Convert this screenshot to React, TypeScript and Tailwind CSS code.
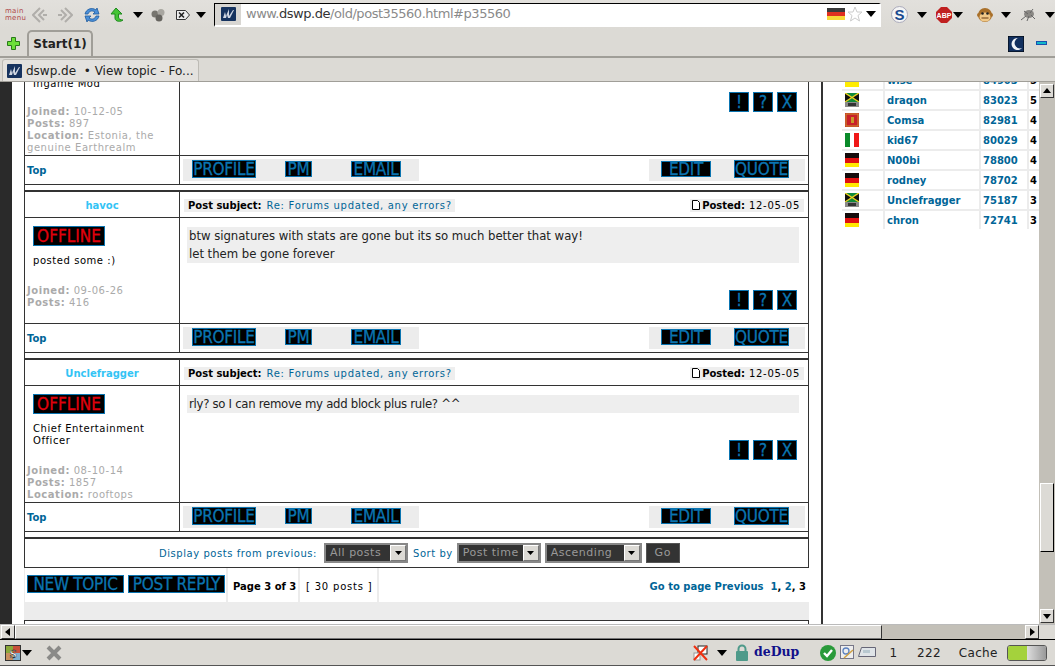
import React from "react";

const DJ = "font-['DejaVu_Sans',sans-serif]";
const COND = "font-['DejaVu_Sans_Condensed','DejaVu_Sans',sans-serif]";

function Caret({ className = "" }: { className?: string }) {
  return (
    <svg width="10" height="6" viewBox="0 0 10 6" className={className}>
      <path d="M0 0h10L5 6z" fill="#000" />
    </svg>
  );
}

function Favicon() {
  return (
    <svg width="15" height="14" viewBox="0 0 15 14" className="shrink-0">
      <rect width="15" height="14" rx="1" fill="#16335f" />
      <path d="M2 11l2-6 1 4 3-7 0 7 4-6 1 0-4 8H7l-1-3-1 3z" fill="#cfd6e2" />
    </svg>
  );
}

function Flag({ kind }: { kind: string }) {
  if (kind === "de")
    return (
      <svg width="14" height="14" viewBox="0 0 14 14">
        <rect width="14" height="5" fill="#140a0a" />
        <rect y="5" width="14" height="5" fill="#e01010" />
        <rect y="10" width="14" height="4" fill="#ffe800" />
      </svg>
    );
  if (kind === "it")
    return (
      <svg width="14" height="14" viewBox="0 0 14 14">
        <rect width="5" height="14" fill="#0a8a2a" />
        <rect x="5" width="4" height="14" fill="#fff" />
        <rect x="9" width="5" height="14" fill="#f01818" />
      </svg>
    );
  if (kind === "me")
    return (
      <svg width="14" height="14" viewBox="0 0 14 14">
        <rect width="14" height="14" fill="#c8202a" />
        <rect x="1" y="1" width="12" height="12" fill="none" stroke="#c8982a" />
        <rect x="6" y="4" width="3" height="6" fill="#c8982a" />
      </svg>
    );
  return (
    <svg width="14" height="14" viewBox="0 0 14 14">
      <rect width="14" height="9" fill="#108a3a" />
      <path d="M0 0l14 9V0L0 9z" fill="#111" />
      <path d="M0 0l14 9M14 0L0 9" stroke="#f0d020" strokeWidth="1.4" />
      <rect y="9" width="14" height="5" fill="#8a8a88" />
      <rect x="3" y="10" width="8" height="3" fill="#333" />
    </svg>
  );
}

function PB({ label, w, h = 16 }: { label: string; w: number; h?: number }) {
  return (
    <span
      style={{ width: w, height: h }}
      className={`inline-flex items-center justify-center bg-black border border-[#0a74b0] text-[#0a74b0] text-[17px] leading-none tracking-[-0.3px] whitespace-nowrap [-webkit-text-stroke:0.3px_#0a74b0] ${COND}`}
    >
      {label}
    </span>
  );
}

function Footer() {
  return (
    <div className="flex h-[29px] border-b border-[#333]">
      <div className={`w-[155px] shrink-0 border-r border-[#333] flex items-center pl-[2px] text-[10px] font-bold text-[#006597] ${DJ}`}>
        Top
      </div>
      <div className="flex-1 flex items-center justify-between pl-[3px] pr-[3px]">
        <div className="h-[22px] w-[236px] bg-[#ececec] flex items-center pb-[2px]">
          <span className="ml-[9px] flex"><PB label="PROFILE" w={64} h={18} /></span>
          <span className="ml-[29px] flex"><PB label="PM" w={27} /></span>
          <span className="ml-[39px] flex"><PB label="EMAIL" w={50} /></span>
        </div>
        <div className="h-[22px] w-[156px] bg-[#ececec] flex items-center pb-[2px]">
          <span className="ml-[12px] flex"><PB label="EDIT" w={50} /></span>
          <span className="ml-[23px] flex"><PB label="QUOTE" w={55} h={18} /></span>
        </div>
      </div>
    </div>
  );
}

function Actions() {
  return (
    <div className="flex justify-end gap-[4px] pr-[11px]">
      {["!", "?", "X"].map((t) => (
        <span key={t} className={`w-[20px] h-[20px] bg-black border border-[#0a74b0] text-[#0a74b0] text-[17px] leading-none flex items-center justify-center [-webkit-text-stroke:0.3px_#0a74b0] ${COND}`}>
          {t}
        </span>
      ))}
    </div>
  );
}

function Stat({ k, v }: { k: string; v: string }) {
  return (
    <div className="leading-[12px]">
      <b>{k}:</b> {v}
    </div>
  );
}

function Post({
  name,
  rank,
  stats,
  body,
  bodyH,
  actionPad,
  statsBottom,
  bodyTrack,
}: {
  name: string;
  rank: string[];
  stats: [string, string][];
  body: string[];
  bodyH: number;
  actionPad: number;
  statsBottom: number;
  bodyTrack: number;
}) {
  return (
    <>
      <div className="h-[2px] bg-[#333]" />
      <div className="flex h-[26px] border-b border-[#333]">
        <div className={`w-[155px] shrink-0 border-r border-[#333] flex items-center justify-center pt-[1px] text-[10px] font-bold text-[#33c4f5] ${DJ}`}>
          {name}
        </div>
        <div className={`flex-1 flex items-center justify-between pl-[4px] pr-[4px] pt-[1px] text-[10px] tracking-[0.7px] ${DJ}`}>
          <div className="bg-[#eee] h-[13px] flex items-center pl-[4px] pr-[3px]">
            <b className="text-black tracking-normal mr-[5px]">Post subject:</b>
            <span className="text-[#006597]">Re: Forums updated, any errors?</span>
          </div>
          <div className="bg-[#eee] h-[13px] flex items-center pl-[2px] pr-[4px] text-black">
            <svg width="8" height="10" viewBox="0 0 8 10" className="mr-[2px]">
              <path d="M.5.5h5l2 2v7h-7z" fill="#fff" stroke="#000" />
            </svg>
            <b className="tracking-normal mr-[4px]">Posted:</b>12-05-05
          </div>
        </div>
      </div>
      <div style={{ height: bodyH + 1 }} className="flex border-b border-[#333]">
        <div className={`w-[155px] shrink-0 border-r border-[#333] flex flex-col text-[10px] tracking-[0.55px] ${DJ}`}>
          <div className={`ml-[8px] mt-[8px] w-[72px] h-[20px] bg-black border border-[#0a74b0] text-[#e0000c] text-[17px] leading-none flex items-center justify-center tracking-[0px] [-webkit-text-stroke:0.3px_#e0000c] ${COND}`}>
            OFFLINE
          </div>
          <div className="ml-[8px] mt-[9px] text-black leading-[12px]">
            {rank.map((r) => (
              <div key={r}>{r}</div>
            ))}
          </div>
          <div style={{ marginBottom: statsBottom }} className="mt-auto ml-[2px] text-[#aaa]">
            {stats.map(([k, v]) => (
              <Stat key={k} k={k} v={v} />
            ))}
          </div>
        </div>
        <div className="flex-1 flex flex-col">
          <div
            style={{ letterSpacing: bodyTrack }}
            className={`mt-[9px] ml-[7px] mr-[9px] bg-[#eee] px-[2px] text-[13px] leading-[18px] text-[#222] whitespace-nowrap ${COND}`}
          >
            {body.map((b) => (
              <div key={b}>{b}</div>
            ))}
          </div>
          <div style={{ marginTop: actionPad }}>
            <Actions />
          </div>
        </div>
      </div>
      <Footer />
      <div className="h-[5px]" />
    </>
  );
}

function Select({ label, w }: { label: string; w: number }) {
  return (
    <span style={{ width: w }} className="h-[20px] bg-[#333] border-2 border-[#888] text-[#999] text-[11px] tracking-[0.5px] flex items-center justify-between pl-[4px]">
      <span className="pt-[1px]">{label}</span>
      <span className="w-[16px] h-[16px] bg-[#dcdad5] border border-t-white border-l-white border-b-[#777] border-r-[#777] flex items-center justify-center">
        <svg width="7" height="4" viewBox="0 0 7 4"><path d="M0 0h7L3.500 4z" fill="#000" /></svg>
      </span>
    </span>
  );
}

const ranks: [string, string, string, string][] = [
  ["jm", "draqon", "83023", "5"],
  ["me", "Comsa", "82981", "4"],
  ["it", "kid67", "80029", "4"],
  ["de", "N00bi", "78800", "4"],
  ["de", "rodney", "78702", "4"],
  ["jm", "Unclefragger", "75187", "3"],
  ["de", "chron", "72741", "3"],
];

function Toolbar() {
  return (
    <div className="h-[29px] shrink-0 flex items-center bg-[linear-gradient(#e2e0dc,#dcdad5)] relative">
      <div className="w-[32px] pl-[5px] text-[7px] leading-[7px] text-[#b04a4a] font-['DejaVu_Sans',sans-serif] tracking-[0.3px]">
        <div>main</div>
        <div>menu</div>
      </div>
      <svg width="16" height="16" viewBox="0 0 16 16" className="shrink-0">
        <path d="M8 1L1 8l7 7M12 3L7 8l5 5" fill="none" stroke="#b0aeaa" strokeWidth="2" />
        <path d="M11 7h4v2h-4z" fill="#b0aeaa" />
      </svg>
      <svg width="16" height="16" viewBox="0 0 16 16" className="ml-[9px] shrink-0">
        <path d="M8 1l7 7-7 7M4 3l5 5-5 5" fill="none" stroke="#b0aeaa" strokeWidth="2" />
        <path d="M1 7h4v2H1z" fill="#b0aeaa" />
      </svg>
      <svg width="18" height="18" viewBox="0 0 18 18" className="ml-[10px] shrink-0">
        <path d="M2 8c1-5 7-7 11-4l1-2 2 6-6 0 2-2c-3-2-6-1-7 2z" fill="#4a8fd8" stroke="#1d5a9e" strokeWidth=".8" />
        <path d="M16 10c-1 5-7 7-11 4l-1 2-2-6 6 0-2 2c3 2 6 1 7-2z" fill="#4a8fd8" stroke="#1d5a9e" strokeWidth=".8" />
      </svg>
      <svg width="16" height="16" viewBox="0 0 16 16" className="ml-[8px] shrink-0">
        <path d="M7 1l6 6H9.500v3c0 2 2 3 4.500 3-2 2-8 2-8-2V7H2z" fill="#45c435" stroke="#1f8a1f" />
      </svg>
      <Caret className="ml-[8px] shrink-0" />
      <svg width="14" height="14" viewBox="0 0 14 14" className="ml-[8px] shrink-0">
        <circle cx="4" cy="6" r="3.500" fill="#77756f" />
        <circle cx="10" cy="4.500" r="3.500" fill="#a8a6a0" />
        <circle cx="8" cy="10" r="3.500" fill="#66645f" />
      </svg>
      <svg width="14" height="10" viewBox="0 0 14 10" className="ml-[11px] shrink-0">
        <path d="M.5.500h9l4 4.500-4 4.500h-9z" fill="#eee" stroke="#333" />
        <path d="M3 2.500l5 5M8 2.500l-5 5" stroke="#222" strokeWidth="1.600" />
      </svg>
      <Caret className="ml-[6px] shrink-0" />
      <div className="ml-[8px] w-[667px] h-[24px] shrink-0 flex items-stretch border-t border-l border-t-black border-l-black border-r-2 border-b-2 border-r-white border-b-white bg-white">
        <div className="w-[26px] bg-[#d8d6d2] flex items-center justify-center"><Favicon /></div>
        <div className="flex-1 pl-[5px] flex items-center text-[13px] tracking-[-0.46px] text-[#8a8a8a] font-['DejaVu_Sans',sans-serif]">
          www.<span className="text-[#333]">dswp.de</span>/old/post35560.html#p35560
        </div>
        <div className="flex items-center pr-[3px]">
          <svg width="18" height="12" viewBox="0 0 18 12">
            <rect width="18" height="4" fill="#3a3a3a" />
            <rect y="4" width="18" height="4" fill="#e03020" />
            <rect y="8" width="18" height="4" fill="#f8d838" />
          </svg>
          <svg width="16" height="16" viewBox="0 0 16 16" className="ml-[2px]">
            <path d="M8 1l2 5h5l-4 3.500 1.500 5.500L8 12l-4.500 3L5 9.500 1 6h5z" fill="#fff" stroke="#ccc" />
          </svg>
          <Caret className="ml-[3px]" />
        </div>
      </div>
      <svg width="17" height="17" viewBox="0 0 17 17" className="ml-[10px] shrink-0">
        <circle cx="8.500" cy="8.500" r="8" fill="#f4f4f4" stroke="#aab" />
        <text x="8.500" y="14" fontSize="15" fontWeight="700" fontFamily="Liberation Sans" textAnchor="middle" fill="#1a4a90">S</text>
      </svg>
      <Caret className="ml-[9px] shrink-0" />
      <svg width="16" height="16" viewBox="0 0 16 16" className="ml-[9px] shrink-0">
        <path d="M5 0h6l5 5v6l-5 5H5l-5-5V5z" fill="#c02020" />
        <text x="8" y="11" fontSize="7" fontWeight="700" fontFamily="Liberation Sans" textAnchor="middle" fill="#fff">ABP</text>
      </svg>
      <Caret className="ml-[1px] shrink-0" />
      <svg width="16" height="17" viewBox="0 0 16 17" className="ml-[14px] shrink-0">
        <circle cx="2" cy="9" r="2" fill="#a9702a" />
        <circle cx="14" cy="9" r="2" fill="#a9702a" />
        <circle cx="8" cy="9" r="7" fill="#a9702a" />
        <ellipse cx="8" cy="11" rx="5.500" ry="4.500" fill="#f0c888" />
        <circle cx="5.500" cy="7.500" r="1.300" fill="#222" />
        <circle cx="10.500" cy="7.500" r="1.300" fill="#222" />
        <path d="M4.500 12h7" stroke="#6a3a10" />
      </svg>
      <Caret className="ml-[8px] shrink-0" />
      <svg width="16" height="14" viewBox="0 0 16 14" className="ml-[9px] shrink-0">
        <ellipse cx="9" cy="6" rx="5" ry="4" fill="#8a8884" />
        <path d="M1 12l5-4M4 3l4 3M13 1l-3 4M15 11l-4-4M7 13l2-5" stroke="#666" />
      </svg>
      <Caret className="ml-[9px] shrink-0" />
    </div>
  );
}

function TabRows() {
  return (
    <>
      <div className="h-[29px] shrink-0 flex items-end bg-[#dcdad5] border-b-2 border-[#a09e98] pl-[7px] pr-[8px]">
        <svg width="13" height="13" viewBox="0 0 13 13" className="mb-[6px] shrink-0">
          <path d="M4.500.500h4v4h4v4h-4v4h-4v-4h-4v-4h4z" fill="#6ddf3a" stroke="#2a7a1a" />
        </svg>
        <div className={`ml-[7px] w-[66px] h-[26px] border-2 border-b-0 border-[#a09e98] rounded-t-[5px] bg-[#dcdad5] flex items-center justify-center text-[12px] font-bold text-[#222] ${DJ}`}>
          Start(1)
        </div>
        <svg width="16" height="16" viewBox="0 0 16 16" className="ml-auto mb-[4px] shrink-0">
          <rect width="16" height="16" fill="#12305f" stroke="#000" />
          <path d="M10 2a6 6 0 1 0 4 10 5 5 0 0 1-4-10z" fill="#f2f4f8" />
        </svg>
        <span className="ml-[12px] mb-[11px] w-[11px] h-[4px] bg-[#12b8c8] border border-[#1a50b0] shrink-0" />
      </div>
      <div className="h-[24px] shrink-0 bg-[#dcdad5] flex items-end pl-[2px] border-b border-[#a09e98]">
        <div className={`w-[197px] h-[22px] bg-[#e4e2de] border border-b-0 border-[#bdbbb5] rounded-t-[3px] flex items-center pl-[4px] text-[12px] text-[#222] ${DJ}`}>
          <Favicon />
          <span className="ml-[4px] whitespace-nowrap">dswp.de&nbsp; • View topic - Fo...</span>
        </div>
      </div>
    </>
  );
}

function Forum() {
  return (
    <div className="w-[785px] ml-[12px] shrink-0 flex flex-col">
      <div className="border-x border-[#333]">
        <div className="flex h-[74px] border-b border-[#333]">
          <div className={`w-[155px] shrink-0 border-r border-[#333] flex flex-col justify-end overflow-hidden text-[10px] tracking-[0.55px] text-[#aaa] pb-[1px] pl-[2px] ${DJ}`}>
            <div className="ml-[6px] text-black leading-[12px] mb-[16px]">Ingame Mod</div>
            <Stat k="Joined" v="10-12-05" />
            <Stat k="Posts" v="897" />
            <Stat k="Location" v="Estonia, the" />
            <div className="leading-[12px]">genuine Earthrealm</div>
          </div>
          <div className="flex-1 pt-[10px]"><Actions /></div>
        </div>
        <Footer />
        <div className="h-[5px]" />
        <Post
          name="havoc"
          rank={["posted some :)"]}
          stats={[["Joined", "09-06-26"], ["Posts", "416"]]}
          body={["btw signatures with stats are gone but its so much better that way!", "let them be gone forever"]}
          bodyH={105}
          actionPad={27}
          statsBottom={14}
          bodyTrack={-0.03}
        />
        <Post
          name="Unclefragger"
          rank={["Chief Entertainment", "Officer"]}
          stats={[["Joined", "08-10-14"], ["Posts", "1857"], ["Location", "rooftops"]]}
          body={["rly? so I can remove my add block plus rule? ^^"]}
          bodyH={116}
          actionPad={27}
          statsBottom={1}
          bodyTrack={-0.28}
        />
        <div className="h-[2px] bg-[#333]" />
        <div className={`h-[29px] border-b border-[#333] flex items-center pl-[134px] text-[10px] tracking-[0.55px] text-[#006597] ${DJ}`}>
          <span>Display posts from previous:</span>
          <span className="ml-[7px]"><Select label="All posts" w={84} /></span>
          <span className="ml-[5px]">Sort by</span>
          <span className="ml-[4px]"><Select label="Post time" w={84} /></span>
          <span className="ml-[4px]"><Select label="Ascending" w={97} /></span>
          <span className="ml-[4px] w-[34px] h-[20px] bg-[#333] border border-[#555] text-[#999] text-[11px] flex items-center justify-center">Go</span>
        </div>
      </div>
      <div className={`h-[34px] flex items-stretch text-[10px] ${DJ}`}>
        <div className="w-[204px] border-l border-r-2 border-[#ececec] flex items-center gap-[4px] pl-[2px] pb-[2px]">
          <PB label="NEW TOPIC" w={97} h={18} />
          <PB label="POST REPLY" w={97} h={18} />
        </div>
        <div className="w-[72px] border-r-2 border-[#ececec] flex items-center pl-[5px] pt-[2px] font-bold whitespace-nowrap">Page 3 of 3</div>
        <div className="w-[79px] border-r-2 border-[#ececec] flex items-center pl-[6px] pt-[2px] tracking-[0.8px] whitespace-nowrap">[ 30 posts ]</div>
        <div className="flex-1 flex items-center justify-end pr-[3px] pt-[2px] font-bold text-[#006597] whitespace-nowrap">
          Go to page Previous&nbsp;&nbsp;1<span className="text-black">,</span>&nbsp;2<span className="text-black">,</span>&nbsp;<span className="text-black">3</span>
        </div>
      </div>
      <div className="h-[18px] bg-[#ececec]" />
      <div className="flex-1 border-t border-x border-[#333]" />
    </div>
  );
}

function Sidebar() {
  const cell = "bg-white h-[18px] flex items-center";
  return (
    <div className={`ml-[19px] w-[198px] bg-[#ececec] flex flex-col gap-[2px] self-start text-[10px] font-bold text-[#006597] ${DJ}`}>
      <div className="h-[7px] flex gap-[2px] overflow-hidden leading-[12px]">
        <div className="w-[41px] bg-white pl-[3px]"><div className="w-[14px] h-[5px] bg-[#ffec00]" /></div>
        <div className="w-[94px] bg-white pl-[2px]"><div className="-mt-[7px]">wise</div></div>
        <div className="w-[46px] bg-white pl-[2px]"><div className="-mt-[7px]">84903</div></div>
        <div className="flex-1 bg-white pl-[1px] text-black"><div className="-mt-[7px]">5</div></div>
      </div>
      {ranks.map(([f, n, p, c]) => (
        <div key={n} className="flex gap-[2px]">
          <div className={`${cell} w-[41px] pl-[3px]`}><Flag kind={f} /></div>
          <div className={`${cell} w-[94px] pl-[2px]`}>{n}</div>
          <div className={`${cell} w-[46px] pl-[2px]`}>{p}</div>
          <div className={`${cell} flex-1 pl-[1px] text-black`}>{c}</div>
        </div>
      ))}
    </div>
  );
}

function ScrollBtn({ d }: { d: string }) {
  return (
    <span className="w-[14px] h-[14px] shrink-0 bg-[#dcdad5] border border-t-white border-l-white border-b-[#333] border-r-[#333] flex items-center justify-center">
      <svg width="8" height="8" viewBox="0 0 8 8"><path d={d} fill="#000" /></svg>
    </span>
  );
}

export default function App() {
  return (
    <div className="w-[1055px] h-[666px] overflow-hidden flex flex-col bg-[#dcdad5]">
      <Toolbar />
      <TabRows />
      <div className="h-[542px] shrink-0 flex bg-white overflow-hidden">
        <div className="w-[12px] shrink-0 bg-[#2a2a2a]" />
        <Forum />
        <div className="ml-[12px] w-[2px] shrink-0 bg-[#333]" />
        <Sidebar />
        <div className="w-[16px] shrink-0 ml-auto bg-[#c3c0b8] flex flex-col items-center pt-[2px] pb-[1px]">
          <ScrollBtn d="M0 6h8L4 1z" />
          <div className="mt-[385px] w-[14px] h-[69px] bg-[#dcdad5] border border-t-white border-l-white border-b-black border-r-black" />
          <div className="mt-auto"><ScrollBtn d="M0 2h8L4 7z" /></div>
        </div>
      </div>
      <div className="h-[15px] shrink-0 flex items-center bg-[#dcdad5] pl-[1px] pr-[16px] border-t border-[#bbb]">
        <ScrollBtn d="M6 0v8L1 4z" />
        <div className="w-[867px] h-[14px] bg-[#dcdad5] border border-t-white border-l-white border-b-[#777] border-r-[#333]" />
        <div className="flex-1 h-[14px] bg-[#c3c0b8] flex justify-end"><ScrollBtn d="M2 0v8l5-4z" /></div>
      </div>
      <div className={`flex-1 flex items-center border-t border-black border-b border-b-[#555] pl-[5px] text-[12px] text-[#222] ${DJ}`}>
        <svg width="16" height="16" viewBox="0 0 16 16" className="shrink-0">
          <rect width="16" height="16" fill="#333" />
          <rect x="1" y="1" width="7" height="7" fill="#8aa83a" />
          <rect x="8" y="1" width="7" height="7" fill="#c8503a" />
          <rect x="1" y="8" width="7" height="7" fill="#c89060" />
          <rect x="8" y="8" width="7" height="7" fill="#80b0d0" />
          <text x="8" y="13" fontSize="13" fontWeight="700" fontFamily="Liberation Serif" textAnchor="middle" fill="#fff" stroke="#000" strokeWidth=".4">S</text>
        </svg>
        <Caret className="ml-[1px] mr-[14px] shrink-0" />
        <svg width="16" height="16" viewBox="0 0 16 16" className="shrink-0">
          <path d="M2 2l12 12M14 2L2 14" stroke="#8a8a88" strokeWidth="4" />
        </svg>
        <svg width="16" height="16" viewBox="0 0 16 16" className="ml-[631px] shrink-0">
          <rect x="5" y="1" width="9" height="8" fill="#fff" stroke="#222" />
          <rect x="1" y="8" width="6" height="7" fill="#fff" stroke="#999" />
          <path d="M1 1l13 14M14 1L1 15" stroke="#f03010" strokeWidth="2" />
        </svg>
        <Caret className="ml-[8px] shrink-0" />
        <svg width="14" height="17" viewBox="0 0 14 17" className="ml-[8px] shrink-0">
          <path d="M3.500 8V5a3.500 3.500 0 0 1 7 0v3" fill="none" stroke="#4e9a8a" strokeWidth="2" />
          <rect x="1" y="7" width="12" height="10" rx="1" fill="#4e9a8a" />
        </svg>
        <span className="ml-[5px] text-[12.5px] font-bold text-[#10108a] font-['DejaVu_Serif','Liberation_Serif',serif]">deDup</span>
        <svg width="16" height="16" viewBox="0 0 16 16" className="ml-[21px] shrink-0">
          <circle cx="8" cy="8" r="8" fill="#2a9a3a" />
          <path d="M4 8l3 3 5-6" fill="none" stroke="#fff" strokeWidth="2.400" />
        </svg>
        <svg width="15" height="15" viewBox="0 0 15 15" className="ml-[4px] shrink-0">
          <rect x=".5" y=".5" width="13" height="13" fill="#eee" stroke="#778" />
          <circle cx="6" cy="6" r="3" fill="none" stroke="#5a80c0" strokeWidth="1.300" />
          <path d="M4 13l9-8" stroke="#d0a040" strokeWidth="1.500" />
        </svg>
        <svg width="18" height="12" viewBox="0 0 18 12" className="ml-[3px] shrink-0">
          <path d="M3.500.500h14v9H.5z" fill="#dfe4e8" stroke="#667" />
          <rect x="5" y="3" width="7" height="3" fill="#b8c8d0" />
        </svg>
        <span className="ml-[13px]">1</span>
        <span className="ml-[20px] tracking-[0.3px]">222</span>
        <span className="ml-[18px] tracking-[0.3px]">Cache</span>
        <span className="ml-[9px] w-[40px] h-[16px] border border-[#555] rounded-[3px] flex overflow-hidden shrink-0">
          <span className="w-[19px] bg-[#a4d23c]" />
          <span className="flex-1 bg-[linear-gradient(90deg,#ddd,#999)]" />
        </span>
      </div>
    </div>
  );
}
